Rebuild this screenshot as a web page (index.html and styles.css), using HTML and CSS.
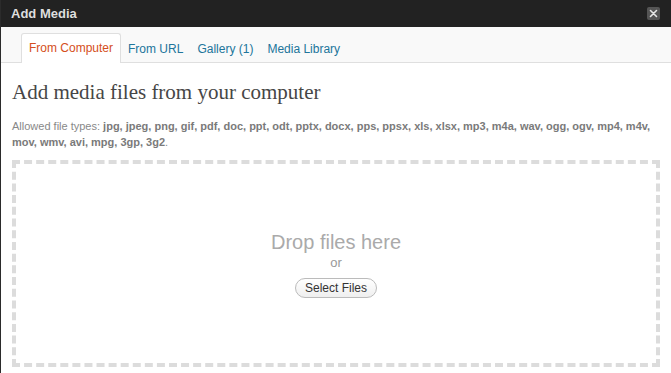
FILE: index.html
```html
<!DOCTYPE html>
<html>
<head>
<meta charset="utf-8">
<link rel="stylesheet" href="styles.css">
</head>
<body>
<div class="frame">
  <div class="titlebar">
    <span class="title">Add Media</span>
    <span class="close" aria-label="Close">
      <svg width="13" height="13" viewBox="0 0 13 13"><path d="M3.5 3.5 L9.5 9.5 M9.5 3.5 L3.5 9.5" stroke="#e6e6e6" stroke-width="1.6" stroke-linecap="round"/></svg>
    </span>
  </div>
  <div class="tabs">
    <a class="tab active">From Computer</a>
    <a class="tab">From URL</a>
    <a class="tab">Gallery (1)</a>
    <a class="tab">Media Library</a>
  </div>
  <div class="content">
    <h3 class="heading">Add media files from your computer</h3>
    <p class="types"><span class="label">Allowed file types:</span> <strong>jpg, jpeg, png, gif, pdf, doc, ppt, odt, pptx, docx, pps, ppsx, xls, xlsx, mp3, m4a, wav, ogg, ogv, mp4, m4v, mov, wmv, avi, mpg, 3gp, 3g2</strong>.</p>
    <div class="dropzone">
      <div class="drop-text">Drop files here</div>
      <div class="drop-or">or</div>
      <button class="select-btn">Select Files</button>
    </div>
  </div>
</div>
</body>
</html>
```
FILE: styles.css
```css
html, body {
  margin: 0;
  padding: 0;
  background: #fff;
}
.frame {
  height: 373px;
  border-left: 1px solid #2b2b2b;
  overflow: hidden;
  font-family: "Liberation Sans", Arial, sans-serif;
}
.titlebar {
  height: 27px;
  background: #222;
  display: flex;
  align-items: center;
  justify-content: space-between;
  padding: 0 11px 0 10px;
}
.title {
  color: #dedede;
  font-weight: bold;
  font-size: 13px;
  margin-top: -1px;
}
.close {
  width: 13px;
  height: 13px;
  background: #555;
  border-radius: 2px;
  display: flex;
}
.tabs {
  height: 35px;
  background: #f9f9f9;
  border-bottom: 1px solid #dfdfdf;
  display: flex;
  align-items: flex-end;
  padding-left: 20px;
  box-sizing: content-box;
}
.tab {
  font-size: 12px;
  color: #21759b;
  padding: 0 6px;
  height: 28px;
  line-height: 28px;
  margin-right: 0;
  margin-bottom: -1px;
  border: 1px solid transparent;
  border-bottom: none;
  border-radius: 3px 3px 0 0;
}
.tab.active {
  color: #d54e21;
  background: #fff;
  border-color: #dfdfdf;
  height: 29px;
  padding: 0 7px;
  margin-right: 0;
}
.content {
  padding: 0 11px;
}
.heading {
  margin: 15px 0 0 0;
  font-family: "Liberation Serif", Georgia, serif;
  font-weight: normal;
  font-size: 21px;
  line-height: 28px;
  color: #464646;
}
.types {
  margin: 12px 0 0 0;
  font-size: 11px;
  line-height: 16px;
  color: #888;
}
.types strong {
  color: #7a7a7a;
}
.dropzone {
  margin-top: 10px;
  border: 4px dashed #dcdcdc;
  display: flex;
  flex-direction: column;
  align-items: center;
  padding-top: 66px;
  box-sizing: content-box;
  height: 133px;
}
.drop-text {
  font-size: 20px;
  line-height: 24px;
  color: #aaa;
}
.drop-or {
  font-size: 13px;
  line-height: 18px;
  color: #999;
}
.select-btn {
  margin-top: 6px;
  height: 20px;
  padding: 0 9px;
  border: 1px solid #bbb;
  border-radius: 11px;
  background: linear-gradient(#fff, #efefef);
  font-family: "Liberation Sans", Arial, sans-serif;
  font-size: 12px;
  color: #333;
}
```
